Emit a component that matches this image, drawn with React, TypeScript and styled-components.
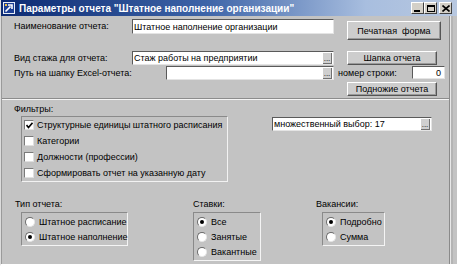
import React, { FC } from "react";
import styled, { createGlobalStyle } from "styled-components";

const GlobalStyle = createGlobalStyle`
  html, body {
    margin: 0;
    padding: 0;
    background: #ffffff;
  }
  body {
    font-family: "Liberation Sans", Arial, sans-serif;
    font-size: 9px;
    color: #000;
  }
`;

const App: FC = () => {
  return (
    <>
      <GlobalStyle />
      <Window>
        <TitleBar>
          <TitleIcon viewBox="0 0 12 12">
            <rect x="0.5" y="0.5" width="11" height="11" fill="#1c3f95" stroke="#e8eef8" />
            <path d="M2.5 9.5 L7.5 4.5 M5 3 L9 3 L9 7" stroke="#ffffff" strokeWidth="1.6" fill="none" />
            <rect x="2" y="2" width="2" height="2" fill="#f0c040" />
          </TitleIcon>
          <TitleText>Параметры отчета "Штатное наполнение организации"</TitleText>
          <Controls>
            <CtrlButton>
              <svg width="7" height="7" viewBox="0 0 7 7">
                <rect x="0" y="5" width="6" height="2" fill="#000" />
              </svg>
            </CtrlButton>
            <CtrlButton>
              <svg width="8" height="7" viewBox="0 0 8 7">
                <rect x="0.5" y="0.5" width="7" height="6" fill="none" stroke="#000" />
                <rect x="0" y="0" width="8" height="2" fill="#000" />
              </svg>
            </CtrlButton>
            <CtrlButton $gap>
              <svg width="8" height="7" viewBox="0 0 8 7">
                <path d="M0.5 0.5 L7.5 6.5 M7.5 0.5 L0.5 6.5" stroke="#000" strokeWidth="1.6" />
              </svg>
            </CtrlButton>
          </Controls>
        </TitleBar>

        <Body>
          <TopSection>
            <FieldRow>
              <Label $width={118}>Наименование отчета:</Label>
              <TextBox $width={202} $height={15}>Штатное наполнение организации</TextBox>
              <Button $width={94} $height={19} $left={13} $top={2}>
                Печатная&nbsp; форма
              </Button>
            </FieldRow>
            <FieldRow $top={11}>
              <Label $width={118}>Вид стажа для отчета:</Label>
              <TextBox $width={202} $height={14}>
                <BoxText>Стаж работы на предприятии</BoxText>
                <Ellipsis>...</Ellipsis>
              </TextBox>
              <Button $width={90} $height={14} $left={13}>
                Шапка отчета
              </Button>
            </FieldRow>
            <FieldRow $top={1}>
              <Label $width={152}>Путь на шапку Excel-отчета:</Label>
              <TextBox $width={168} $height={14}>
                <BoxText />
                <Ellipsis>...</Ellipsis>
              </TextBox>
              <Label $width={74} $left={4}>
                номер строки:
              </Label>
              <TextBox $width={33} $height={13} $right>
                0
              </TextBox>
            </FieldRow>
            <FieldRow $top={2}>
              <Button $width={90} $height={14} $left={333}>
                Подножие отчета
              </Button>
            </FieldRow>
          </TopSection>

          <Separator />

          <FilterSection>
            <SectionTitle>Фильтры:</SectionTitle>
            <FilterRow>
              <Panel $width={207}>
                <CheckRow>
                  <CheckBox>
                    <svg width="7" height="7" viewBox="0 0 7 7">
                      <path d="M0.5 3 L2.5 5.5 L6.5 0.8" stroke="#000" strokeWidth="1.6" fill="none" />
                    </svg>
                  </CheckBox>
                  Структурные единицы штатного расписания
                </CheckRow>
                <CheckRow>
                  <CheckBox />
                  Категории
                </CheckRow>
                <CheckRow>
                  <CheckBox />
                  Должности (профессии)
                </CheckRow>
                <CheckRow>
                  <CheckBox />
                  Сформировать отчет на указанную дату
                </CheckRow>
              </Panel>
              <ComboBox>
                <BoxText>множественный выбор: 17</BoxText>
                <Ellipsis>...</Ellipsis>
              </ComboBox>
            </FilterRow>
          </FilterSection>

          <BottomRow>
            <Group $gapAfter={65}>
              <SectionTitle>Тип отчета:</SectionTitle>
              <GroupBox $indent={6} $width={107}>
                <RadioRow>
                  <Radio />
                  Штатное расписание
                </RadioRow>
                <RadioRow>
                  <Radio $checked />
                  Штатное наполнение
                </RadioRow>
              </GroupBox>
            </Group>
            <Group $gapAfter={55}>
              <SectionTitle>Ставки:</SectionTitle>
              <GroupBox $indent={0} $width={68}>
                <RadioRow>
                  <Radio $checked />
                  Все
                </RadioRow>
                <RadioRow>
                  <Radio />
                  Занятые
                </RadioRow>
                <RadioRow>
                  <Radio />
                  Вакантные
                </RadioRow>
              </GroupBox>
            </Group>
            <Group>
              <SectionTitle>Вакансии:</SectionTitle>
              <GroupBox $indent={6} $width={63}>
                <RadioRow>
                  <Radio $checked />
                  Подробно
                </RadioRow>
                <RadioRow>
                  <Radio />
                  Сумма
                </RadioRow>
              </GroupBox>
            </Group>
          </BottomRow>
        </Body>
      </Window>
    </>
  );
};

export default App;

const Window = styled.div`
  width: 457px;
  height: 266px;
  display: flex;
  flex-direction: column;
  box-sizing: border-box;
  background: #c3c3c3;
  border-left: 1px solid #dcdcdc;
  border-bottom: 2px solid #ffffff;
  overflow: hidden;
`;

const TitleBar = styled.div`
  height: 16px;
  flex: none;
  display: flex;
  align-items: center;
  padding: 0 3px 0 2px;
  background: linear-gradient(to right, #0c2a72 0%, #3d64a8 45%, #a8bedf 80%, #b8c8e0 100%);
`;

const TitleIcon = styled.svg`
  width: 12px;
  height: 12px;
  flex: none;
  margin-right: 4px;
`;

const TitleText = styled.div`
  flex: 1;
  color: #ffffff;
  font-weight: bold;
  font-size: 10px;
  white-space: nowrap;
`;

const Controls = styled.div`
  display: flex;
  align-items: center;
  margin-right: 2px;
`;

const CtrlButton = styled.div<{ $gap?: boolean }>`
  width: 11px;
  height: 10px;
  margin-left: ${(p) => (p.$gap ? "2px" : "0")};
  display: flex;
  align-items: center;
  justify-content: center;
  background: #d4d0c8;
  border-top: 1px solid #ffffff;
  border-left: 1px solid #ffffff;
  border-right: 1px solid #404040;
  border-bottom: 1px solid #404040;
`;

const Body = styled.div`
  flex: 1;
  display: flex;
  flex-direction: column;
  border-left: 1px solid #9a9a9a;
  border-right: 1px solid #8a8a8a;
  margin-right: 7px;
  box-shadow: 1px 0 0 #e8e8e8, 3px 0 0 #b4b4b4;
`;

const TopSection = styled.div`
  padding: 3px 0 0 12px;
  display: flex;
  flex-direction: column;
`;

const FieldRow = styled.div<{ $top?: number }>`
  display: flex;
  align-items: flex-start;
  margin-top: ${(p) => p.$top ?? 0}px;
`;

const Label = styled.div<{ $width: number; $left?: number }>`
  width: ${(p) => p.$width}px;
  margin-left: ${(p) => p.$left ?? 0}px;
  flex: none;
  line-height: 14px;
  white-space: nowrap;
`;

const TextBox = styled.div<{ $width: number; $height: number; $right?: boolean }>`
  width: ${(p) => p.$width}px;
  height: ${(p) => p.$height}px;
  flex: none;
  box-sizing: border-box;
  display: flex;
  align-items: center;
  justify-content: ${(p) => (p.$right ? "flex-end" : "flex-start")};
  padding: 0 ${(p) => (p.$right ? "3px" : "0")} 0 1px;
  background: #ffffff;
  border-top: 1px solid #5a5a5a;
  border-left: 1px solid #5a5a5a;
  border-right: 1px solid #e4e4e4;
  border-bottom: 1px solid #e4e4e4;
  white-space: nowrap;
  overflow: hidden;
`;

const BoxText = styled.span`
  flex: 1;
  overflow: hidden;
`;

const Ellipsis = styled.span`
  width: 8px;
  height: 10px;
  flex: none;
  display: flex;
  align-items: flex-end;
  justify-content: center;
  margin-right: 1px;
  font-size: 8px;
  line-height: 8px;
  background: #cfcfcf;
  border-right: 1px solid #707070;
  border-bottom: 1px solid #707070;
`;

const Button = styled.div<{ $width: number; $height: number; $left?: number; $top?: number }>`
  width: ${(p) => p.$width}px;
  height: ${(p) => p.$height}px;
  margin-left: ${(p) => p.$left ?? 0}px;
  margin-top: ${(p) => p.$top ?? 0}px;
  flex: none;
  box-sizing: border-box;
  display: flex;
  align-items: center;
  justify-content: center;
  background: #cdcdcd;
  border-top: 1px solid #ffffff;
  border-left: 1px solid #ffffff;
  border-right: 1px solid #555555;
  border-bottom: 1px solid #555555;
  box-shadow: inset -1px -1px 0 #9a9a9a;
  white-space: nowrap;
`;

const Separator = styled.div`
  margin-top: 2px;
  height: 0;
  border-top: 1px solid #8c8c8c;
  border-bottom: 1px solid #f4f4f4;
`;

const FilterSection = styled.div`
  padding: 3px 0 0 12px;
  display: flex;
  flex-direction: column;
`;

const SectionTitle = styled.div`
  line-height: 13px;
  white-space: nowrap;
`;

const FilterRow = styled.div`
  display: flex;
  align-items: flex-start;
  padding-left: 7px;
`;

const Panel = styled.div<{ $width: number }>`
  width: ${(p) => p.$width}px;
  box-sizing: border-box;
  border-top: 1px solid #8a8a8a;
  border-left: 1px solid #8a8a8a;
  border-right: 1px solid #f2f2f2;
  border-bottom: 1px solid #f2f2f2;
  display: flex;
  flex-direction: column;
`;

const CheckRow = styled.div`
  height: 16px;
  display: flex;
  align-items: center;
  padding-left: 2px;
  white-space: nowrap;
`;

const CheckBox = styled.span`
  width: 10px;
  height: 10px;
  flex: none;
  box-sizing: border-box;
  margin-right: 3px;
  display: flex;
  align-items: center;
  justify-content: center;
  background: #ffffff;
  border-top: 1px solid #7a7a7a;
  border-left: 1px solid #7a7a7a;
  border-right: 1px solid #e0e0e0;
  border-bottom: 1px solid #e0e0e0;
`;

const ComboBox = styled(TextBox).attrs({ $width: 160, $height: 14 })`
  margin-left: 44px;
  margin-top: 1px;
`;

const BottomRow = styled.div`
  display: flex;
  align-items: flex-start;
  padding: 16px 0 0 13px;
`;

const Group = styled.div<{ $gapAfter?: number }>`
  display: flex;
  flex-direction: column;
  margin-right: ${(p) => p.$gapAfter ?? 0}px;
`;

const GroupBox = styled.div<{ $indent: number; $width: number }>`
  width: ${(p) => p.$width}px;
  box-sizing: border-box;
  margin-left: ${(p) => p.$indent}px;
  margin-top: 1px;
  padding: 1px 0 1px 3px;
  display: flex;
  flex-direction: column;
  border-top: 1px solid #8a8a8a;
  border-left: 1px solid #8a8a8a;
  border-right: 1px solid #f4f4f4;
  border-bottom: 1px solid #f4f4f4;
`;

const RadioRow = styled.div`
  height: 15px;
  display: flex;
  align-items: center;
  white-space: nowrap;
`;

const Radio = styled.span<{ $checked?: boolean }>`
  width: 10px;
  height: 10px;
  flex: none;
  box-sizing: border-box;
  margin-right: 4px;
  border-radius: 50%;
  background: #ffffff;
  border: 1px solid;
  border-color: #6a6a6a #e6e6e6 #e6e6e6 #6a6a6a;
  display: flex;
  align-items: center;
  justify-content: center;
  &::after {
    content: "";
    width: 4px;
    height: 4px;
    border-radius: 50%;
    background: #000;
    display: ${(p) => (p.$checked ? "block" : "none")};
  }
`;
